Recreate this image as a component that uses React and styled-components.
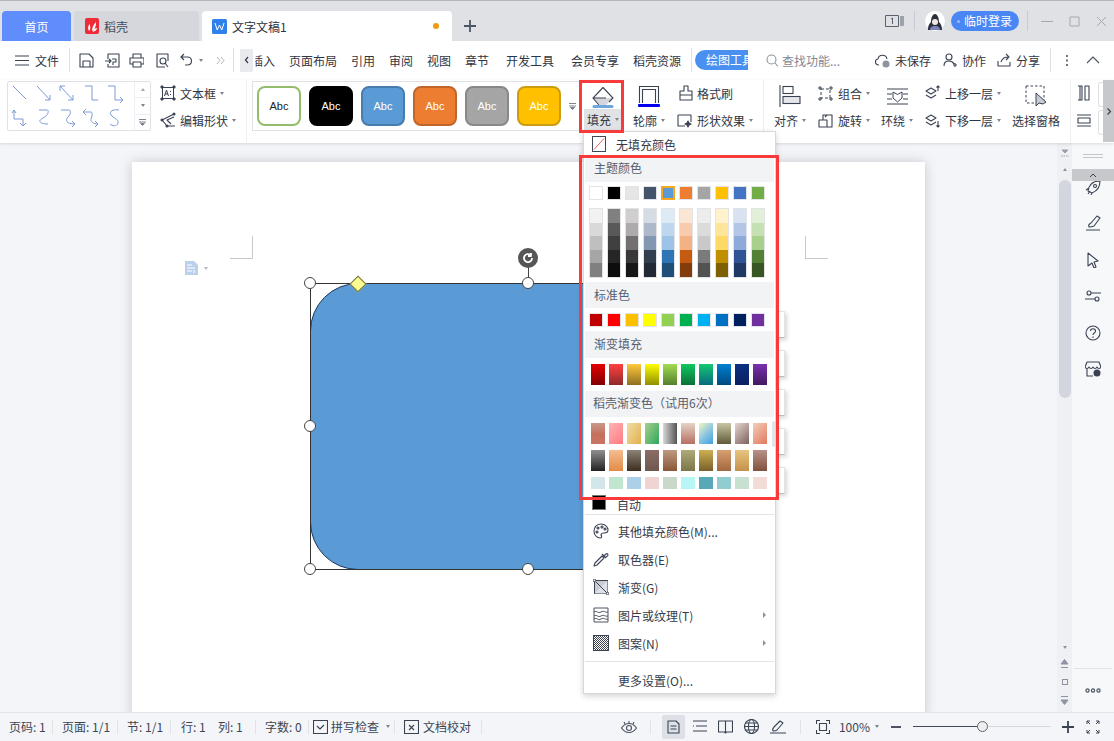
import React from 'react';
import styled, { createGlobalStyle } from 'styled-components';

const GlobalStyle = createGlobalStyle`
  html, body { margin: 0; padding: 0; height: 100%; overflow: hidden; }
  body { font-family: "Noto Sans CJK SC", "Liberation Sans", sans-serif; color: #333c4c; }
  #root { height: 100%; }
`;

const Frame = styled.div`
  width: 1114px;
  height: 741px;
  position: relative;
  display: flex;
  flex-direction: column;
  overflow: hidden;
  background: #fff;
`;

const Spacer = styled.span`
  width: ${p => p.$w}px;
  flex: none;
`;

// title bar
const TitleBar = styled.div`
  height: 41px;
  flex: none;
  background: #dfe1e5;
  border-top: 1px solid #b5b5b5;
  box-sizing: border-box;
  display: flex;
  align-items: flex-end;
  padding-left: 2px;
  gap: 3px;
  font-size: 12px;
`;

const HomeTab = styled.div`
  width: 69px;
  height: 30px;
  border-radius: 4px 4px 0 0;
  background: #5f8dfb;
  color: #fff;
  display: flex;
  align-items: center;
  justify-content: center;
`;

const GrayTab = styled.div`
  width: 125px;
  height: 30px;
  border-radius: 4px 4px 0 0;
  background: #d5d7dc;
  color: #454c5a;
  display: flex;
  align-items: center;
  gap: 5px;
  padding-left: 11px;
  box-sizing: border-box;
`;

const DocTab = styled.div`
  width: 250px;
  height: 30px;
  border-radius: 4px 4px 0 0;
  background: #fff;
  color: #2b3240;
  display: flex;
  align-items: center;
  gap: 5px;
  padding-left: 10px;
  box-sizing: border-box;
`;

const UnsavedDot = styled.span`
  width: 6px;
  height: 6px;
  border-radius: 50%;
  background: #ee9a12;
  margin-left: auto;
  margin-right: 13px;
`;

const AddTab = styled.div`
  width: 36px;
  height: 30px;
  margin-left: -3px;
  display: flex;
  align-items: center;
  justify-content: center;
`;

const TitleRight = styled.div`
  margin-left: auto;
  height: 40px;
  align-self: flex-start;
  display: flex;
  align-items: center;
  padding-right: 7px;
`;

const TitleDivider = styled.span`
  width: 1px;
  height: 20px;
  background: #c8cbd1;
  margin: 0 ${p => p.$mr}px 0 ${p => p.$ml}px;
`;

const LoginPill = styled.div`
  width: 68px;
  height: 20px;
  margin-left: 6px;
  border-radius: 10px;
  background: #4a87f5;
  color: #fff;
  line-height: 20px;
  white-space: nowrap;
  text-align: right;
  padding-right: 7px;
  box-sizing: border-box;
  position: relative;
  &::before {
    content: '';
    position: absolute;
    left: 6px;
    top: 9px;
    width: 3px;
    height: 3px;
    border-radius: 50%;
    background: #9dbdf8;
  }
`;

const WinButtons = styled.div`
  display: flex;
  align-items: center;
  gap: 16px;
`;

// menu row
const MenuRow = styled.div`
  height: 39px;
  flex: none;
  display: flex;
  align-items: center;
  background: #fff;
  padding: 0 0 1px 15px;
  box-sizing: border-box;
  font-size: 12px;
  color: #2f3643;
  white-space: nowrap;
`;

const MenuIconBtn = styled.span`
  display: inline-flex;
  align-items: center;
  flex: none;
  margin-right: ${p => p.$mr ?? 8}px;
`;

const VRule = styled.span`
  width: 1px;
  height: 24px;
  background: #dfe1e5;
  flex: none;
  margin: 0 ${p => p.$mr ?? 0}px 0 ${p => p.$ml ?? 0}px;
`;

const TabScroller = styled.span`
  width: 13px;
  height: 23px;
  background: #e8eaee;
  display: flex;
  align-items: center;
  justify-content: center;
  flex: none;
`;

const TabLabel = styled.span`
  width: ${p => p.$w}px;
  flex: none;
`;

const ClippedLabel = styled.span`
  width: 20px;
  flex: none;
  overflow: hidden;
  direction: rtl;
  display: inline-block;
  margin: 0 14px 0 2px;
`;

const DrawTab = styled.div`
  width: 53px;
  height: 20px;
  flex: none;
  border-radius: 10px 0 0 10px;
  background: #4a90f0;
  color: #fff;
  line-height: 20px;
  overflow: hidden;
  padding-left: 11px;
  box-sizing: border-box;
  margin-left: 3px;
`;

const SearchBox = styled.div`
  display: flex;
  align-items: center;
  gap: 4px;
  color: #7f8794;
  margin-left: 18px;
  width: 109px;
  flex: none;
`;

const MenuAction = styled.span`
  display: inline-flex;
  align-items: center;
  gap: 5px;
  flex: none;
  margin-right: ${p => p.$mr}px;
`;

// ribbon
const Ribbon = styled.div`
  height: 63px;
  flex: none;
  position: relative;
  z-index: 2;
  background: #fff;
  box-shadow: 0 1px 3px rgba(0, 0, 0, 0.12);
  display: flex;
  align-items: flex-start;
  font-size: 12px;
  color: #2f3643;
  white-space: nowrap;
  padding-left: 7px;
  box-sizing: border-box;
`;

const ShapeGallery = styled.div`
  width: 144px;
  height: 50px;
  margin-top: 1px;
  border: 1px solid #e0e2e6;
  border-radius: 2px;
  box-sizing: border-box;
  display: flex;
  flex: none;
`;

const ShapeGrid = styled.div`
  display: grid;
  grid-template-columns: repeat(5, 23.7px);
  grid-template-rows: repeat(2, 24px);
  padding: 1px 0 0 1px;
`;

const GalleryArrows = styled.div`
  width: 15px;
  margin-left: auto;
  border-left: 1px solid #eceef1;
  display: flex;
  flex-direction: column;
`;

const GalleryCell = styled.div`
  flex: 1;
  display: flex;
  align-items: center;
  justify-content: center;
  & + & { border-top: 1px solid #eceef1; }
`;

const Caret = styled.span`
  width: 0;
  height: 0;
  flex: none;
  border-left: 2.5px solid transparent;
  border-right: 2.5px solid transparent;
  border-top: 3px solid ${p => p.$c || '#7e8591'};
  margin-left: ${p => p.$ml ?? 4}px;
  display: inline-block;
  transform: ${p => (p.$up ? 'rotate(180deg)' : 'none')};
`;

const ToolStack = styled.div`
  width: ${p => p.$w}px;
  flex: none;
  margin-left: ${p => p.$ml ?? 0}px;
  display: flex;
  flex-direction: column;
  gap: 5px;
  padding-top: 2px;
`;

const ToolLine = styled.div`
  height: 22px;
  display: flex;
  align-items: center;
  gap: ${p => p.$gap ?? 5}px;
  padding-left: ${p => p.$pl ?? 0}px;
`;

const Label = styled.div`
  height: 22px;
  display: flex;
  align-items: center;
`;

const StyleStrip = styled.div`
  width: 328px;
  height: 50px;
  flex: none;
  margin-top: 1px;
  border: 1px solid #e0e2e6;
  border-right: none;
  box-sizing: border-box;
  display: flex;
  align-items: center;
  gap: 8px;
  padding-left: 4px;
`;

const StyleCard = styled.div`
  width: 44px;
  height: 40px;
  flex: none;
  box-sizing: border-box;
  border-radius: 8px;
  border: 2px solid ${p => p.$border};
  background: ${p => p.$bg};
  color: ${p => p.$color};
  font-size: 11px;
  font-family: "Liberation Sans", sans-serif;
  display: flex;
  align-items: center;
  justify-content: center;
`;

const StripMore = styled.span`
  margin-left: auto;
  margin-right: 5px;
  display: flex;
`;

const FillButton = styled.div`
  width: 38px;
  height: 49px;
  flex: none;
  margin: 1px 0 0 4px;
  display: flex;
  flex-direction: column;
`;

const FillTop = styled.div`
  height: 28px;
  display: flex;
  justify-content: center;
  align-items: flex-end;
`;

const FillBottom = styled.div`
  height: 21px;
  background: #e0e2e6;
  display: flex;
  align-items: center;
  justify-content: center;
`;

const TallTool = styled.div`
  width: ${p => p.$w}px;
  flex: none;
  display: flex;
  flex-direction: column;
  align-items: center;
  padding-top: 4px;
`;

const TallIcon = styled.div`
  height: 24px;
  margin-bottom: 1px;
  display: flex;
  align-items: center;
  justify-content: center;
`;

const RibbonRule = styled.span`
  width: 1px;
  height: 62px;
  background: #eceef1;
  flex: none;
  margin: 0 ${p => p.$mr ?? 0}px 0 ${p => p.$ml ?? 0}px;
`;

const SmallGallery = styled.div`
  width: 5px;
  flex: none;
  display: flex;
  flex-direction: column;
  gap: 3px;
  padding-top: 2px;
`;

const SmallCell = styled.span`
  height: 23px;
  border: 1px solid #e0e2e6;
  border-right: none;
  border-radius: 3px 0 0 3px;
`;

const RibbonEnd = styled.div`
  position: absolute;
  right: 0;
  top: 0;
  width: 11px;
  height: 62px;
  background: #c6c8cc;
  display: flex;
  align-items: center;
  justify-content: center;
`;

// document area
const Workspace = styled.div`
  flex: 1;
  min-height: 0;
  display: flex;
  background: #f3f5f8;
`;

const DocArea = styled.div`
  flex: 1;
  min-width: 0;
  padding: 19px 0 0 132px;
  overflow: hidden;
`;

const Page = styled.div`
  width: 793px;
  height: 560px;
  background: #fff;
  box-shadow: 0 0 12px rgba(0, 0, 0, 0.18);
  position: relative;
`;

const CropMark = styled.span`
  position: absolute;
  width: 22px;
  height: 22px;
  top: 74px;
  ${p => (p.$right ? 'right: 97px; border-left: 1px solid #c9c9c9;' : 'left: 98px; border-right: 1px solid #c9c9c9;')}
  border-bottom: 1px solid #c9c9c9;
`;

const DocMarker = styled.div`
  position: absolute;
  left: 53px;
  top: 99px;
  display: flex;
  align-items: center;
  gap: 6px;
`;

const ShapeBox = styled.div`
  position: absolute;
  left: 178px;
  top: 121px;
  width: 436px;
  height: 287px;
  box-sizing: border-box;
  background: #5b9bd5;
  border: 1px solid #1f3556;
  border-radius: 48px;
`;

const SelectionBox = styled.div`
  position: absolute;
  left: 178px;
  top: 121px;
  width: 300px;
  height: 287px;
  box-sizing: border-box;
  border-left: 1px solid #333;
  border-top: 1px solid #333;
  border-bottom: 1px solid #333;
`;

const Handle = styled.span`
  position: absolute;
  left: ${p => p.$x}px;
  top: ${p => p.$y}px;
  width: 12px;
  height: 12px;
  box-sizing: border-box;
  border-radius: 50%;
  background: #fff;
  border: 1px solid #444;
`;

const Adjust = styled.span`
  position: absolute;
  left: 220px;
  top: 116px;
  width: 10px;
  height: 10px;
  background: #fdfa8f;
  border: 1px solid #6f6f40;
  transform: rotate(45deg);
`;

const RotateStem = styled.span`
  position: absolute;
  left: 396px;
  top: 105px;
  width: 1px;
  height: 12px;
  background: #444;
`;

const RotateKnob = styled.span`
  position: absolute;
  left: 386px;
  top: 86px;
  width: 20px;
  height: 20px;
  border-radius: 50%;
  background: #565656;
  display: flex;
  align-items: center;
  justify-content: center;
`;

const PanelPeek = styled.span`
  position: absolute;
  left: 640px;
  top: ${p => p.$y}px;
  width: 13px;
  height: 27px;
  box-sizing: border-box;
  background: #fff;
  border: 1px solid #e3e3e3;
  border-left: none;
  border-bottom-color: #bdbdbd;
  box-shadow: 2px 2px 4px rgba(0, 0, 0, 0.16);
`;

// scroll column and side bar
const ScrollColumn = styled.div`
  width: 15px;
  flex: none;
  background: #eef0f4;
  display: flex;
  flex-direction: column;
  align-items: center;
`;

const ScrollGrip = styled.div`
  height: 20px;
  flex: none;
  margin-bottom: 5px;
  display: flex;
  align-items: center;
  justify-content: center;
`;

const ScrollThumb = styled.div`
  width: 12px;
  height: 218px;
  flex: none;
  border-radius: 6px;
  background: #d3d6df;
  margin-top: 9px;
`;

const ScrollFoot = styled.div`
  margin-top: auto;
  display: flex;
  flex-direction: column;
  align-items: center;
  gap: 10px;
  padding-bottom: 7px;
`;

const ScrollRect = styled.span`
  width: 6px;
  height: 6px;
  border: 1px solid #8d93a0;
  box-sizing: border-box;
`;

const SideBar = styled.div`
  width: 42px;
  flex: none;
  background: #f6f8fa;
  display: flex;
  flex-direction: column;
  align-items: center;
`;

const SideGrip = styled.div`
  height: 26px;
  width: 100%;
  flex: none;
  display: flex;
  flex-direction: column;
  align-items: center;
  justify-content: center;
  gap: 2px;
  &::before, &::after {
    content: '';
    width: 20px;
    height: 1px;
    background: #c4c7cc;
  }
`;

const SideCollapse = styled.div`
  width: 100%;
  height: 12px;
  flex: none;
  background: #c6c8cc;
  display: flex;
  align-items: center;
  justify-content: center;
`;

const SideIcon = styled.div`
  height: ${p => p.$h ?? 36.5}px;
  flex: none;
  display: flex;
  align-items: ${p => (p.$top ? 'flex-start' : 'center')};
  justify-content: center;
`;

const SideDots = styled.div`
  margin-top: auto;
  width: 38px;
  height: 43px;
  flex: none;
  border-top: 1px solid #e0e2e6;
  display: flex;
  align-items: center;
  justify-content: center;
`;

// status bar
const StatusBar = styled.div`
  height: 29px;
  flex: none;
  position: relative;
  z-index: 2;
  background: #f3f5f8;
  border-top: 1px solid #e1e3e7;
  box-sizing: border-box;
  display: flex;
  align-items: center;
  padding: 0 0 1px 9px;
  font-size: 12px;
  color: #3d4553;
  white-space: nowrap;
`;

const StatusItem = styled.span`
  display: inline-flex;
  align-items: center;
  flex: none;
  width: ${p => (p.$w ? `${p.$w}px` : 'auto')};
  gap: ${p => p.$gap ?? 0}px;
`;

const StatusRule = styled.span`
  width: 1px;
  height: 14px;
  background: #e1e3e7;
  flex: none;
  margin: 0 ${p => p.$mr ?? 9}px 0 ${p => p.$ml ?? 0}px;
`;

const StatusRight = styled.div`
  margin-left: auto;
  display: flex;
  align-items: center;
  padding-right: 14px;
`;

const ActiveView = styled.span`
  width: 23px;
  height: 24px;
  margin-right: 2px;
  display: flex;
  align-items: center;
  justify-content: center;
  border-radius: 2px;
  background: #dde1e7;
`;

const ViewButton = styled.span`
  width: 26px;
  height: 24px;
  display: flex;
  align-items: center;
  justify-content: center;
`;

const Zoomer = styled.span`
  width: 138px;
  height: 12px;
  position: relative;
  flex: none;
  margin: 0 11px 0 12px;
  &::before {
    content: '';
    position: absolute;
    left: 0;
    right: 0;
    top: 5px;
    height: 1px;
    background: #d6d8dc;
  }
  &::after {
    content: '';
    position: absolute;
    left: 0;
    width: 66px;
    top: 5px;
    height: 1px;
    background: #434a58;
  }
`;

const ZoomKnob = styled.span`
  position: absolute;
  z-index: 1;
  left: 64px;
  top: 0;
  width: 11px;
  height: 11px;
  box-sizing: border-box;
  border: 1px solid #666;
  border-radius: 50%;
  background: #eceef0;
`;

// fill dropdown
const Dropdown = styled.div`
  position: absolute;
  z-index: 5;
  left: 583px;
  top: 131px;
  width: 193px;
  height: 563px;
  box-sizing: border-box;
  background: #fff;
  border: 1px solid #d6d8dc;
  box-shadow: 0 2px 6px rgba(0, 0, 0, 0.18);
  font-size: 12px;
  color: #343b49;
  display: flex;
  flex-direction: column;
`;

const NoFill = styled.div`
  height: 26px;
  display: flex;
  align-items: center;
  gap: 10px;
  padding: 0 0 2px 8px;
  box-sizing: border-box;
  flex: none;
`;

const SectionHead = styled.div`
  height: ${p => p.$h}px;
  flex: none;
  background: #f2f3f5;
  margin-left: 1px;
  width: 189px;
  display: flex;
  align-items: center;
  padding: 0 0 ${p => p.$pb ?? 2}px ${p => p.$pl ?? 9}px;
  box-sizing: border-box;
  color: #566070;
`;

const SwatchRow = styled.div`
  display: flex;
  gap: 4px;
  padding: ${p => p.$pt}px 0 0 ${p => p.$pl ?? 5}px;
  height: ${p => p.$h}px;
  box-sizing: border-box;
  flex: none;
`;

const Swatch = styled.span`
  width: 14px;
  height: 14px;
  box-sizing: border-box;
  flex: none;
  background: ${p => p.$c};
  border: ${p => (p.$sel ? '2px solid #f5a623' : '1px solid #e2e3e6')};
`;

const TintColumn = styled.div`
  width: 14px;
  height: 70px;
  box-sizing: border-box;
  flex: none;
  border: 1px solid #e2e3e6;
  display: flex;
  flex-direction: column;
`;

const Tint = styled.span`
  flex: 1;
  background: ${p => p.$c};
`;

const GradChip = styled.span`
  width: 14px;
  height: ${p => p.$h || 21}px;
  flex: none;
  background: ${p => p.$bg};
`;

const GradGrid = styled.div`
  display: grid;
  grid-template-columns: repeat(10, 14px);
  column-gap: 4px;
  row-gap: 6px;
  padding: 6px 0 0 7px;
  flex: none;
`;

const ThinScroll = styled.span`
  position: absolute;
  left: 188px;
  top: 289px;
  width: 3px;
  height: 26px;
  background: #e4e5e8;
  border-radius: 2px;
`;

const AutoColor = styled.div`
  height: 19px;
  margin-top: 6px;
  flex: none;
  position: relative;
  padding-left: 33px;
  line-height: 19px;
`;

const AutoSwatch = styled.span`
  position: absolute;
  left: 8px;
  top: 0;
  width: 14px;
  height: 15px;
  box-sizing: border-box;
  background: #000;
  border: 1px solid #777;
`;

const MenuRule = styled.div`
  height: 1px;
  flex: none;
  background: #e2e3e6;
  margin: ${p => p.$mt ?? 0}px 1px ${p => p.$mb ?? 2}px;
  width: 189px;
`;

const MenuItem = styled.div`
  height: 28px;
  flex: none;
  display: flex;
  align-items: center;
  padding-left: ${p => p.$pl ?? 9}px;
  position: relative;
`;

const ItemIcon = styled.span`
  width: 16px;
  height: 16px;
  display: flex;
  margin-right: 9px;
  flex: none;
`;

const SubArrow = styled.span`
  position: absolute;
  right: 9px;
  top: 11px;
  width: 0;
  height: 0;
  border-top: 3px solid transparent;
  border-bottom: 3px solid transparent;
  border-left: 3px solid #8b92a0;
`;

const RedBox = styled.div`
  position: absolute;
  z-index: 6;
  left: ${p => p.$x}px;
  top: ${p => p.$y}px;
  width: ${p => p.$w}px;
  height: ${p => p.$h}px;
  box-sizing: border-box;
  border: 3px solid #f83a3a;
  pointer-events: none;
`;

const Ic = ({ w = 16, h = 16, sw = 1.1, c = '#3a4252', children }) => (
  <svg width={w} height={h} viewBox={`0 0 ${w} ${h}`} fill="none" stroke={c} strokeWidth={sw} strokeLinejoin="round">
    {children}
  </svg>
);

const MoreIcon = () => (
  <Ic w={7} h={8} c="#7e8591" sw={1}><path d="M0 1.5h7M0 4h7" /><path d="M1.5 5.5h4L3.5 7.5z" fill="#7e8591" /></Ic>
);

const DoubleArrow = ({ up }) => (
  <Ic w={9} h={10} c="#8d93a0" sw={1}>
    {up
      ? <><path d="M4.5 0.5L8 5H1z" fill="#8d93a0" /><path d="M1 8.5h7" /></>
      : <><path d="M1 1.5h7" /><path d="M4.5 9.5L8 5H1z" fill="#8d93a0" /></>}
  </Ic>
);

const themeRow = ['#ffffff', '#000000', '#e7e6e6', '#44546a', '#5b9bd5', '#ed7d31', '#a5a5a5', '#ffc000', '#4472c4', '#70ad47'];
const tints = [
  ['#f2f2f2', '#d9d9d9', '#bfbfbf', '#a6a6a6', '#808080'],
  ['#808080', '#595959', '#404040', '#262626', '#0d0d0d'],
  ['#d0cece', '#aeabab', '#757070', '#3a3838', '#171616'],
  ['#d6dce4', '#adb9ca', '#8497b0', '#333f4f', '#222b35'],
  ['#deeaf6', '#bdd7ee', '#9dc3e6', '#2e75b5', '#1f4e79'],
  ['#fbe5d5', '#f7cbac', '#f4b183', '#c55a11', '#833c0b'],
  ['#ededed', '#dbdbdb', '#c9c9c9', '#7b7b7b', '#525252'],
  ['#fff2cc', '#fee599', '#ffd966', '#bf8f00', '#7f6000'],
  ['#d9e2f3', '#b4c6e7', '#8eaadb', '#2f5496', '#1f3864'],
  ['#e2efd9', '#c5e0b3', '#a8d08d', '#538135', '#375623'],
];
const standard = ['#c00000', '#ff0000', '#ffc000', '#ffff00', '#92d050', '#00b050', '#00b0f0', '#0070c0', '#002060', '#7030a0'];
const grads = [
  ['#e60000', '#800000'], ['#ff4040', '#8f2a2a'], ['#ffc93c', '#8f6f20'], ['#ffff00', '#8f8f00'], ['#a2dc50', '#55802e'],
  ['#10c860', '#0b7038'], ['#14c870', '#086a80'], ['#0080d0', '#004a80'], ['#0a3080', '#0a2060'], ['#7c30b0', '#401a60'],
];
const shellOne = [
  'linear-gradient(#c9988a 0%, #c4705c 55%, #c97662)', 'linear-gradient(135deg, #ffb3b8, #ff7a80)', 'linear-gradient(120deg, #f0dca8, #e3b04b)', 'linear-gradient(120deg, #a8d08d, #2fa65c)', 'linear-gradient(90deg, #d8d8d8, #555)',
  'linear-gradient(#e5d3c6, #b56f62)', 'linear-gradient(135deg, #f5f5c0, #8fc8e0 50%, #3f9fe0)', 'linear-gradient(#c9c4a0, #5f5a3a)', 'linear-gradient(135deg, #e5d5d0, #7d625c)', 'linear-gradient(135deg, #f4cdb8, #e07a5f)',
];
const shellTwo = [
  'linear-gradient(#909090, #222)', 'linear-gradient(#f4bd92, #e38b45)', 'linear-gradient(#8c8278, #3d2d1e)', 'linear-gradient(#8b6d64, #6d5750)', 'linear-gradient(#bd9a82, #8a5636)',
  'linear-gradient(#b0aa7a, #7a7648)', 'linear-gradient(#cdb050, #7a5f2c)', 'linear-gradient(#d6a070, #a4683e)', 'linear-gradient(#e8c47e, #c4914c)', 'linear-gradient(#b89288, #82503e)',
];
const shellThree = ['#d3e6ea', '#c0e6d0', '#abd0e8', '#f0d3d3', '#c9d8c8', '#b8f6f6', '#58a8b8', '#90ccd0', '#c8e0d0', '#f3dcd8'];

const shapePaths = [
  'M4 3L17 16',
  'M4 3L17 17M12 17h5v-5',
  'M4 3L17 17M12 17h5v-5M9 3H4v5',
  'M5 3h7v14h6',
  'M4 3h7v14h8M16 14l3 3-3 3',
  'M5 3v9h9v7M3 6l2-3 2 3M11 16l3 3 3-3',
  'M6 3h8c2 0 2 5-4 8s-3 6 5 6',
  'M5 3h8c2 0 2 4-1 7s-2 7 7 7M16 14l3 3-3 3',
  'M3 5l3-3M3 5l3 3M3 5h8c2 0 1 5 0 7s2 5 7 5M15 14l3 3-3 3',
  'M15 3C8 2 5 5 7 8s8 4 7 8-6 3-8 1',
];

export default function App() {
  return (
    <Frame>
      <GlobalStyle />
      <TitleBar>
        <HomeTab>首页</HomeTab>
        <GrayTab>
          <svg width="14" height="16" viewBox="0 0 14 16">
            <rect width="14" height="16" rx="2" fill="#ee2b36" />
            <path d="M4 13c-2-4 0-6 1-7 0 3 1 5-1 7zM7 13c0-4 2-7 4-9 0 4-1 8-4 9zM8 14c2-1 4-2 4-4-1 0-4 1-4 4z" fill="#fff" />
          </svg>
          稻壳
        </GrayTab>
        <DocTab>
          <svg width="15" height="15" viewBox="0 0 15 15">
            <rect width="15" height="15" rx="1.5" fill="#2f80ed" />
            <path d="M3 4l2.2 7L7.5 6l2.3 5L12 4" fill="none" stroke="#fff" strokeWidth="1" />
          </svg>
          文字文稿1
          <UnsavedDot />
        </DocTab>
        <AddTab>
          <Ic w={14} h={14} c="#4b5568" sw={1.8}><path d="M7 1v12M1 7h12" /></Ic>
        </AddTab>
        <TitleRight>
          <Ic w={19} h={14} c="#5a6270" sw={1}><rect x="0.5" y="1.5" width="13" height="11" /><path d="M16 2v10M18 2v10M6 5l1.5-1v6" /></Ic>
          <TitleDivider $ml={10} $mr={10} />
          <svg width="20" height="20" viewBox="0 0 20 20">
            <circle cx="10" cy="10" r="10" fill="#fff" />
            <path d="M3 19c0-5 2-7 3-8 0-5 2-8 4-8s4 3 4 8c1 1 3 3 3 8z" fill="#2b2f3c" />
            <circle cx="10" cy="11" r="3" fill="#f3e7e0" />
            <path d="M5 19c0-3 2-4 5-4s5 1 5 4z" fill="#7c83b8" />
          </svg>
          <LoginPill>临时登录</LoginPill>
          <TitleDivider $ml={8} $mr={13} />
          <WinButtons>
            <Ic w={12} h={11} c="#a5a9b1" sw={1}><path d="M0 5.5h12" /></Ic>
            <Ic w={11} h={11} c="#a5a9b1" sw={1}><rect x="1" y="1" width="9" height="9" /></Ic>
            <Ic w={11} h={11} c="#a5a9b1" sw={1}><path d="M1 1l9 9M10 1l-9 9" /></Ic>
          </WinButtons>
        </TitleRight>
      </TitleBar>

      <MenuRow>
        <MenuIconBtn $mr={6}>
          <Ic w={14} h={11} sw={1}><path d="M0 1h14M0 5.5h14M0 10h14" /></Ic>
        </MenuIconBtn>
        文件
        <VRule $ml={10} $mr={9} />
        <MenuIconBtn $mr={11}><Ic w={15} h={15}><path d="M1 1h9l4 4v9H1zM4 14V8h7v6" /></Ic></MenuIconBtn>
        <MenuIconBtn $mr={9}><Ic w={15} h={15}><path d="M3 6V1h11v13H3v-3M0 8h6M4 6l2 2-2 2M7 6h4v3H8v3" /></Ic></MenuIconBtn>
        <MenuIconBtn $mr={11}><Ic w={15} h={15}><path d="M4 5V1h8v4M4 11H1V5h14v6h-3M4 9h8v5H4z" /></Ic></MenuIconBtn>
        <MenuIconBtn $mr={10}><Ic w={15} h={15}><path d="M13 8V1H2v13h8" /><circle cx="8" cy="8" r="3" /><path d="M10 10l3 4" /></Ic></MenuIconBtn>
        <MenuIconBtn $mr={13}>
          <Ic w={13} h={14}><path d="M4 1L1 4l3 3M1 4h6c6 0 6 8 0 8H5" /></Ic>
          <Caret $ml={6} />
        </MenuIconBtn>
        <MenuIconBtn $mr={0}><Ic w={9} h={9} c="#a4a9b2" sw={0.9}><path d="M1 1l3 3.5L1 8M5 1l3 3.5L5 8" /></Ic></MenuIconBtn>
        <VRule $ml={8} $mr={6} />
        <TabScroller><Ic w={6} h={8} sw={1.3}><path d="M4 1L1.5 4 4 7" /></Ic></TabScroller>
        <ClippedLabel>插入</ClippedLabel>
        <TabLabel $w={62}>页面布局</TabLabel>
        <TabLabel $w={38}>引用</TabLabel>
        <TabLabel $w={38}>审阅</TabLabel>
        <TabLabel $w={38}>视图</TabLabel>
        <TabLabel $w={41}>章节</TabLabel>
        <TabLabel $w={65}>开发工具</TabLabel>
        <TabLabel $w={62}>会员专享</TabLabel>
        <TabLabel $w={58}>稻壳资源</TabLabel>
        <VRule />
        <DrawTab>绘图工具</DrawTab>
        <SearchBox>
          <Ic w={12} h={13} c="#8a919d"><circle cx="5.5" cy="5.5" r="4.5" /><path d="M9 9l3 3.5" /></Ic>
          查找功能...
        </SearchBox>
        <MenuAction $mr={12}>
          <Ic w={15} h={15}><path d="M4 12c-5 0-4-6-1-6 1-5 8-5 9 0" /><circle cx="11" cy="11" r="3.5" fill="#8d94a0" stroke="none" /></Ic>
          未保存
        </MenuAction>
        <MenuAction $mr={11}>
          <Ic w={14} h={14}><circle cx="6" cy="4" r="3" /><path d="M1 13c0-4 2-5 5-5s4 1 5 3M10 12h4M12 10v4" /></Ic>
          协作
        </MenuAction>
        <MenuAction $mr={10}>
          <Ic w={14} h={14}><path d="M1 8v5h12V9M4 9c1-3 4-5 7-5M9 1l3 3-3 3" /></Ic>
          分享
        </MenuAction>
        <VRule $mr={13} />
        <Ic w={6} h={13} c="#4a5261" sw={1.6}><path d="M3 1v2M3 5.5v2M3 10v2" /></Ic>
        <Spacer $w={16} />
        <Ic w={14} h={8} c="#4a5261"><path d="M1 7l6-6 6 6" /></Ic>
      </MenuRow>

      <Ribbon>
        <ShapeGallery>
          <ShapeGrid>
            {shapePaths.map(p => <Ic key={p} w={20} h={20} c="#7d9ad6" sw={1}><path d={p} /></Ic>)}
          </ShapeGrid>
          <GalleryArrows>
            <GalleryCell><Caret $ml={0} $c="#a3a8b2" $up /></GalleryCell>
            <GalleryCell><Caret $ml={0} /></GalleryCell>
            <GalleryCell><MoreIcon /></GalleryCell>
          </GalleryArrows>
        </ShapeGallery>
        <ToolStack $w={85} $ml={9}>
          <ToolLine $gap={4}>
            <Ic w={16} h={16} sw={1}><path d="M2.5 2.5h11v11h-11z" /><path d="M4.5 11l2-6 2 6M5 9h3M10.5 6v1M10.5 9v1" /><rect x="1" y="1" width="2" height="2" fill="#3a4252" /><rect x="13" y="1" width="2" height="2" fill="#3a4252" /><rect x="1" y="13" width="2" height="2" fill="#3a4252" /><rect x="13" y="13" width="2" height="2" fill="#3a4252" /></Ic>
            <Label>文本框<Caret /></Label>
          </ToolLine>
          <ToolLine $gap={4}>
            <Ic w={16} h={16} sw={1.1}><path d="M14 2L2 8l5 6h8M14 5L7 8l4 4" /><circle cx="2" cy="8" r="1" fill="#3a4252" /><circle cx="7" cy="14" r="1" fill="#3a4252" /><circle cx="14" cy="2" r="1" fill="#3a4252" /></Ic>
            <Label>编辑形状<Caret /></Label>
          </ToolLine>
        </ToolStack>
        <RibbonRule $ml={1} $mr={5} />
        <StyleStrip>
          <StyleCard $border="#92bd6a" $bg="#fff" $color="#222">Abc</StyleCard>
          <StyleCard $border="#000" $bg="#000" $color="#fff">Abc</StyleCard>
          <StyleCard $border="#487cae" $bg="#5b9bd5" $color="#fff">Abc</StyleCard>
          <StyleCard $border="#c0662a" $bg="#ed7d31" $color="#fff">Abc</StyleCard>
          <StyleCard $border="#888" $bg="#a5a5a5" $color="#fff">Abc</StyleCard>
          <StyleCard $border="#cc9c12" $bg="#ffc000" $color="#fff">Abc</StyleCard>
          <StripMore><MoreIcon /></StripMore>
        </StyleStrip>
        <FillButton>
          <FillTop>
            <svg width="22" height="22" viewBox="0 0 22 22" fill="none" stroke="#3a4252" strokeWidth="1.1">
              <path d="M1 11h20l-7 7H8z" fill="#d4d6dc" stroke="none" />
              <path d="M11 0.5L21 11l-4 4M11 0.5L1 11l6 7M1 11h13" />
              <rect x="0.5" y="18" width="21" height="3" rx="1.5" fill="#6ea7dd" stroke="none" />
            </svg>
          </FillTop>
          <FillBottom>填充<Caret /></FillBottom>
        </FillButton>
        <TallTool $w={54}>
          <TallIcon>
            <svg width="22" height="22" viewBox="0 0 22 22" fill="none" stroke="#3a4252" strokeWidth="1.1">
              <path d="M1.5 18V1.5h19V18M4.5 18V4.5h13V18" />
              <rect x="0" y="19" width="22" height="3" rx="1" fill="#0000ee" stroke="none" />
            </svg>
          </TallIcon>
          <Label>轮廓<Caret /></Label>
        </TallTool>
        <ToolStack $w={87}>
          <ToolLine $gap={4} $pl={3}>
            <Ic w={14} h={16}><path d="M5 1h4v5h4v9H1V6h4zM1 10h12" /></Ic>
            格式刷
          </ToolLine>
          <ToolLine $pl={1}>
            <Ic w={15} h={15}><path d="M1 2h13v7M1 2v11h7" /><path d="M11 8l1 2 2 1-2 1-1 2-1-2-2-1 2-1z" fill="#3a4252" /></Ic>
            <Label>形状效果<Caret /></Label>
          </ToolLine>
        </ToolStack>
        <RibbonRule />
        <TallTool $w={52}>
          <TallIcon>
            <svg width="22" height="22" viewBox="0 0 22 22" fill="none" stroke="#3a4252" strokeWidth="1.1">
              <path d="M1 0v22" />
              <rect x="4" y="1.5" width="10" height="7" />
              <rect x="4" y="11.5" width="17" height="7" fill="#e4e6ea" />
            </svg>
          </TallIcon>
          <Label>对齐<Caret /></Label>
        </TallTool>
        <ToolStack $w={56} $ml={2}>
          <ToolLine>
            <Ic w={15} h={15} sw={1}><path d="M3 3h9v9H3z" strokeDasharray="3 2" /><rect x="1" y="1" width="2" height="2" /><rect x="12" y="12" width="2" height="2" /><rect x="12" y="1" width="2" height="2" /><rect x="1" y="12" width="2" height="2" /></Ic>
            <Label>组合<Caret /></Label>
          </ToolLine>
          <ToolLine>
            <Ic w={15} h={15}><path d="M1 7h8v7H1zM5 7V2h9v12H9M7 4l2-2" /></Ic>
            <Label>旋转<Caret /></Label>
          </ToolLine>
        </ToolStack>
        <TallTool $w={46}>
          <TallIcon>
            <Ic w={21} h={20} sw={1}><path d="M0 3h21M0 8h5M16 8h5M0 13h5M16 13h5M0 18h21M6 6l4.5 2.5L15 6v6l-4.5 4L6 12z" /></Ic>
          </TallIcon>
          <Label>环绕<Caret /></Label>
        </TallTool>
        <ToolStack $w={83} $ml={5}>
          <ToolLine>
            <Ic w={15} h={16}><path d="M1 6l5-3 5 3-5 3zM1 10l5 3 5-3M13 6V1M11.5 2.5L13 1l1.5 1.5" /></Ic>
            <Label>上移一层<Caret /></Label>
          </ToolLine>
          <ToolLine>
            <Ic w={15} h={16}><path d="M1 6l5-3 5 3-5 3zM1 10l5 3 5-3M13 9v6M11.5 13.5L13 15l1.5-1.5" /></Ic>
            <Label>下移一层<Caret /></Label>
          </ToolLine>
        </ToolStack>
        <TallTool $w={56}>
          <TallIcon>
            <Ic w={22} h={22} sw={1}><rect x="1" y="1" width="18" height="17" strokeDasharray="2.5 2" /><path d="M11 8v13l3-3 4 1 3-2z" fill="#c8ccd2" /></Ic>
          </TallIcon>
          <Label>选择窗格</Label>
        </TallTool>
        <RibbonRule $ml={6} $mr={6} />
        <ToolStack $w={21}>
          <ToolLine><Ic w={13} h={16}><path d="M1 1h2v14H1M3 1h2v14H3M8 1h4v14H8z" /></Ic></ToolLine>
          <ToolLine><Ic w={14} h={13}><path d="M0 1h14M0 12h14M1 4h12v5H1z" /></Ic></ToolLine>
        </ToolStack>
        <SmallGallery><SmallCell /><SmallCell /></SmallGallery>
        <RibbonEnd>
          <Ic w={6} h={9} sw={1.2}><path d="M1.5 1.5L4.5 4.5 1.5 7.5" /></Ic>
        </RibbonEnd>
      </Ribbon>

      <Workspace>
        <DocArea>
          <Page>
            <CropMark />
            <CropMark $right />
            <DocMarker>
              <svg width="13" height="14" viewBox="0 0 13 14">
                <path d="M0 0h9l4 4v10H0z" fill="#bcd0ec" />
                <path d="M2 4h5M2 7h8M2 10h5M9 9v3" stroke="#fff" />
              </svg>
              <Caret $ml={0} $c="#b5b8bd" />
            </DocMarker>
            <ShapeBox />
            <SelectionBox />
            <RotateStem />
            <RotateKnob>
              <Ic w={12} h={12} c="#fff" sw={1.8}><path d="M10 6a4 4 0 1 1-1.5-3M9 1v3H6" /></Ic>
            </RotateKnob>
            <Handle $x={172} $y={115} />
            <Handle $x={390} $y={115} />
            <Handle $x={172} $y={258} />
            <Handle $x={172} $y={401} />
            <Handle $x={390} $y={401} />
            <Adjust />
            {[149, 188, 227, 266, 305].map(y => <PanelPeek key={y} $y={y} />)}
          </Page>
        </DocArea>
        <ScrollColumn>
          <ScrollGrip>
            <Ic w={8} h={8} c="#9aa0ab" sw={1}><path d="M1 1h6L4 4z" fill="#9aa0ab" /><path d="M0 7h8" strokeDasharray="1.5 1" /></Ic>
          </ScrollGrip>
          <Caret $ml={0} $c="#8d93a0" $up />
          <ScrollThumb />
          <ScrollFoot>
            <Caret $ml={0} $c="#8d93a0" />
            <DoubleArrow up />
            <ScrollRect />
            <DoubleArrow />
          </ScrollFoot>
        </ScrollColumn>
        <SideBar>
          <SideGrip />
          <SideCollapse>
            <Ic w={8} h={5} sw={1}><path d="M1 4l3-3 3 3" /></Ic>
          </SideCollapse>
          <SideIcon $h={24} $top>
            <Ic w={16} h={14}><path d="M3 10C4 3 9 0 15 0c0 6-3 10-8 12zM1 9l3-2M3 13l2-3M6 14l1-2" /><circle cx="10" cy="5" r="1.5" /></Ic>
          </SideIcon>
          <SideIcon>
            <Ic w={16} h={16}><path d="M1 15h14M4 12c-1-2 0-3 2-4l6-7 3 2-6 8c-2 1-3 1-5 1z" /></Ic>
          </SideIcon>
          <SideIcon>
            <Ic w={14} h={16}><path d="M2 1l10 8-4 1 2 5-2 1-2-5-4 3z" /></Ic>
          </SideIcon>
          <SideIcon>
            <Ic w={16} h={14}><circle cx="4" cy="4" r="2" /><path d="M6 4h10M0 10h10" /><circle cx="12" cy="10" r="2" /></Ic>
          </SideIcon>
          <SideIcon>
            <Ic w={16} h={16}><circle cx="8" cy="8" r="7" /><path d="M5.5 6c0-3 5-3 5 0 0 2-2.5 2-2.5 4M8 11.5v1.5" /></Ic>
          </SideIcon>
          <SideIcon>
            <Ic w={16} h={16}><path d="M2 1h12l2 5c-1 2-3 2-4 0-1 2-3 2-4 0-1 2-3 2-4 0-1 2-3 2-4 0zM2 8v7h6" /><circle cx="12" cy="12" r="3.5" fill="#3a4252" stroke="none" /></Ic>
          </SideIcon>
          <SideDots>
            <Ic w={16} h={5} c="#4a5261" sw={1.2}><circle cx="2.5" cy="2.5" r="1.6" /><circle cx="8" cy="2.5" r="1.6" /><circle cx="13.5" cy="2.5" r="1.6" /></Ic>
          </SideDots>
        </SideBar>
      </Workspace>

      <StatusBar>
        <StatusItem $w={43}>页码: 1</StatusItem>
        <StatusRule />
        <StatusItem $w={55}>页面: 1/1</StatusItem>
        <StatusRule />
        <StatusItem $w={43}>节: 1/1</StatusItem>
        <StatusRule $mr={10} />
        <StatusItem $w={37}>行: 1</StatusItem>
        <StatusItem $w={37}>列: 1</StatusItem>
        <StatusRule />
        <StatusItem $w={43}>字数: 0</StatusItem>
        <StatusRule $mr={4} />
        <StatusItem $w={81} $gap={3}>
          <Ic w={15} h={14}><rect x="0.5" y="0.5" width="14" height="13" /><path d="M4 6l3 3 4-4" /></Ic>
          拼写检查<Caret $ml={4} />
        </StatusItem>
        <StatusRule />
        <StatusItem $w={77} $gap={4}>
          <Ic w={15} h={14}><rect x="0.5" y="0.5" width="14" height="13" /><path d="M5 5l5 5M10 5l-5 5" /></Ic>
          文档校对
        </StatusItem>
        <StatusRule />
        <StatusRight>
          <Ic w={16} h={14} c="#4a5261"><path d="M0.5 8c4-6 11-6 15 0-4 6-11 6-15 0z" /><circle cx="8" cy="8" r="2.5" /><path d="M8 1v2M3 2l1 2M13 2l-1 2" /></Ic>
          <StatusRule $ml={13} $mr={11} />
          <ActiveView>
            <Ic w={13} h={14}><path d="M1 1h8l3 3v9H1zM3.5 6h6M3.5 9h6" /></Ic>
          </ActiveView>
          <ViewButton>
            <Ic w={14} h={13}><path d="M0 1h14M3 6h11M0 6h1M0 11h14" /></Ic>
          </ViewButton>
          <ViewButton>
            <Ic w={15} h={14}><path d="M0.5 1h14v11H8.5l-1 1-1-1H0.5zM7.5 1v11" /></Ic>
          </ViewButton>
          <ViewButton>
            <Ic w={15} h={15}><circle cx="7.5" cy="7.5" r="7" /><ellipse cx="7.5" cy="7.5" rx="3" ry="7" /><path d="M0.5 7.5h14M1.5 4h12M1.5 11h12" /></Ic>
          </ViewButton>
          <ViewButton>
            <Ic w={16} h={15}><path d="M0 14h16M3 12c-1-2 0-3 1-4l6-6 3 2-6 7c-1 1-3 1-4 1z" /></Ic>
          </ViewButton>
          <StatusRule $ml={9} $mr={15} />
          <Ic w={14} h={14}><path d="M0.5 4V0.5H4M10 0.5h3.5V4M0.5 10v3.5H4M10 13.5h3.5V10" /><rect x="3.5" y="3.5" width="7" height="7" /></Ic>
          <Spacer $w={9} />
          <StatusItem>100%<Caret $ml={5} /></StatusItem>
          <Spacer $w={12} />
          <Ic w={10} h={10} c="#3a4252" sw={1.8}><path d="M0 5h10" /></Ic>
          <Zoomer><ZoomKnob /></Zoomer>
          <Ic w={12} h={12} c="#3a4252" sw={1.8}><path d="M0 6h12M6 0v12" /></Ic>
          <Spacer $w={12} />
          <Ic w={14} h={14} sw={1}><path d="M1 4V1h3M13 4V1h-3M1 10v3h3M13 10v3h-3M1 1l3 3M13 1l-3 3M1 13l3-3M13 13l-3-3" /></Ic>
        </StatusRight>
      </StatusBar>

      <Dropdown>
        <NoFill>
          <svg width="14" height="16" viewBox="0 0 14 16" fill="none">
            <rect x="0.5" y="0.5" width="13" height="15" stroke="#3f4858" />
            <path d="M2 13.5L12 2.5" stroke="#f0606a" />
          </svg>
          <span>无填充颜色</span>
        </NoFill>
        <SectionHead $h={24} $pb={5}>主题颜色</SectionHead>
        <SwatchRow $h={26} $pt={4}>
          {themeRow.map((c, i) => <Swatch key={c} $c={c} $sel={i === 4} />)}
        </SwatchRow>
        <SwatchRow $h={74} $pt={0}>
          {tints.map(col => (
            <TintColumn key={col[0] + col[4]}>
              {col.map(c => <Tint key={c} $c={c} />)}
            </TintColumn>
          ))}
        </SwatchRow>
        <SectionHead $h={26}>标准色</SectionHead>
        <SwatchRow $h={23} $pt={5}>
          {standard.map(c => <Swatch key={c} $c={c} />)}
        </SwatchRow>
        <SectionHead $h={27}>渐变填充</SectionHead>
        <SwatchRow $h={33} $pt={6} $pl={7}>
          {grads.map(g => <GradChip key={g[0] + g[1]} $bg={`linear-gradient(${g[0]}, ${g[1]})`} />)}
        </SwatchRow>
        <SectionHead $h={26} $pl={8} $pb={4}>稻壳渐变色（试用6次）</SectionHead>
        <GradGrid>
          {shellOne.map(g => <GradChip key={g} $bg={g} />)}
          {shellTwo.map(g => <GradChip key={g} $bg={g} />)}
          {shellThree.map(g => <GradChip key={g} $bg={g} $h={12} />)}
        </GradGrid>
        <ThinScroll />
        <AutoColor><AutoSwatch />自动</AutoColor>
        <MenuRule />
        <MenuItem>
          <ItemIcon>
            <Ic w={16} h={16}><path d="M8 1C3 1 1 5 1 8c0 4 3 7 6 7 2 0 2-2 1-3 0-2 2-2 3-2 3 0 4-1 4-3 0-3-3-6-7-6z" /><circle cx="5" cy="5" r="1" /><circle cx="9" cy="4" r="1" /><circle cx="12" cy="6" r="1" /><circle cx="4" cy="9" r="1" /></Ic>
          </ItemIcon>
          其他填充颜色(M)...
        </MenuItem>
        <MenuItem>
          <ItemIcon>
            <Ic w={16} h={16}><path d="M1 15l1-3 7-7 2 2-7 7zM9 3l4 4M11 5l2-2c1-1 2 0 2 1s-1 1-2 2" /></Ic>
          </ItemIcon>
          取色器(E)
        </MenuItem>
        <MenuItem>
          <ItemIcon>
            <svg width="16" height="16" viewBox="0 0 16 16">
              <rect x="1.5" y="1.5" width="13" height="13" fill="#c9ccd3" stroke="#3a4252" />
              <path d="M14.5 1.5v13h-13z" fill="#dfe1e6" />
              <path d="M1.5 1.5l13 13" stroke="#3a4252" />
              <circle cx="1.5" cy="1.5" r="1.3" fill="#fff" stroke="#3a4252" />
              <circle cx="14.5" cy="14.5" r="1.3" fill="#fff" stroke="#3a4252" />
            </svg>
          </ItemIcon>
          渐变(G)
        </MenuItem>
        <MenuItem>
          <ItemIcon>
            <Ic w={16} h={16} sw={0.9}><rect x="1" y="1" width="14" height="14" /><path d="M1 5c3-2 4 2 7 0s4 1 7 0M1 9c3-2 4 2 7 0s4 1 7 0M1 12c3-2 4 2 7 0s4 1 7 0" /></Ic>
          </ItemIcon>
          图片或纹理(T)
          <SubArrow />
        </MenuItem>
        <MenuItem>
          <ItemIcon>
            <svg width="16" height="16" viewBox="0 0 16 16">
              <defs>
                <pattern id="hatch" width="2" height="2" patternUnits="userSpaceOnUse">
                  <rect width="1" height="1" fill="#3a4252" />
                  <rect x="1" y="1" width="1" height="1" fill="#3a4252" />
                </pattern>
              </defs>
              <rect x="0.5" y="0.5" width="15" height="15" fill="url(#hatch)" stroke="#3a4252" />
            </svg>
          </ItemIcon>
          图案(N)
          <SubArrow />
        </MenuItem>
        <MenuRule $mt={4} $mb={4} />
        <MenuItem $pl={34}>更多设置(O)...</MenuItem>
      </Dropdown>

      <RedBox $x={579} $y={80} $w={45} $h={53} />
      <RedBox $x={579} $y={155} $w={200} $h={345} />
    </Frame>
  );
}
